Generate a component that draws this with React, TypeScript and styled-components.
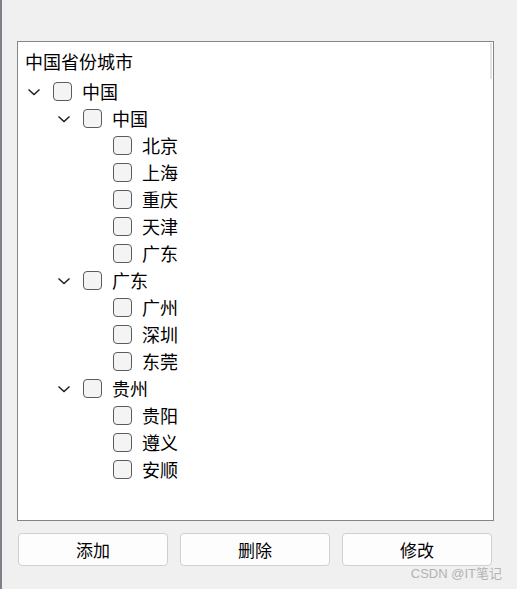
import styled, { createGlobalStyle } from 'styled-components';

const GlobalStyle = createGlobalStyle`
  html, body {
    margin: 0;
    padding: 0;
    background: #f0f0f0;
  }
  body {
    font-family: 'Noto Sans CJK SC', 'Noto Sans', sans-serif;
  }
`;

type Node = { label: string; children?: Node[] };

const tree: Node[] = [
  {
    label: '中国',
    children: [
      {
        label: '中国',
        children: [
          { label: '北京' },
          { label: '上海' },
          { label: '重庆' },
          { label: '天津' },
          { label: '广东' },
        ],
      },
      {
        label: '广东',
        children: [{ label: '广州' }, { label: '深圳' }, { label: '东莞' }],
      },
      {
        label: '贵州',
        children: [{ label: '贵阳' }, { label: '遵义' }, { label: '安顺' }],
      },
    ],
  },
];

const Chevron = () => (
  <svg width="14" height="8" viewBox="0 0 14 8">
    <path d="M1.5 1.5 L7 6.5 L12.5 1.5" fill="none" stroke="#1a1a1a" strokeWidth="1.4" />
  </svg>
);

const TreeRows = ({ nodes, level }: { nodes: Node[]; level: number }) => (
  <>
    {nodes.map((n, i) => (
      <div key={i}>
        <Row level={level}>
          <Expander>{n.children ? <Chevron /> : null}</Expander>
          <Check />
          <Label>{n.label}</Label>
        </Row>
        {n.children && <TreeRows nodes={n.children} level={level + 1} />}
      </div>
    ))}
  </>
);

const App: React.FC = () => {
  return (
    <Window>
      <GlobalStyle />
      <Edge />
      <Body>
        <TreeBox>
          <ScrollHint />
          <Header>中国省份城市</Header>
          <TreeRows nodes={tree} level={0} />
        </TreeBox>
        <Buttons>
          <Button>添加</Button>
          <Button>删除</Button>
          <Button>修改</Button>
        </Buttons>
      </Body>
      <Watermark>CSDN @IT笔记</Watermark>
    </Window>
  );
};

export default App;

const Window = styled.div`
  position: relative;
  display: flex;
  width: 517px;
  height: 589px;
  background: #f0f0f0;
  overflow: hidden;
`;

const Edge = styled.div`
  width: 2px;
  background: #7c8288;
`;

const Body = styled.div`
  display: flex;
  flex-direction: column;
  padding: 41px 0 0 15px;
`;

const TreeBox = styled.div`
  position: relative;
  box-sizing: border-box;
  width: 477px;
  height: 480px;
  background: #ffffff;
  border: 1px solid #858585;
  padding: 6px 0 0 7px;
`;

const ScrollHint = styled.div`
  position: absolute;
  top: 1px;
  right: 1px;
  width: 2px;
  height: 36px;
  background: #e2e2e2;
`;

const Header = styled.div`
  height: 27px;
  line-height: 27px;
  margin-bottom: 3px;
  font-size: 18px;
  color: #000;
`;

const Row = styled.div<{ level: number }>`
  display: flex;
  align-items: center;
  height: 27px;
  padding-left: ${p => p.level * 30}px;
`;

const Expander = styled.div`
  display: flex;
  align-items: center;
  justify-content: center;
  width: 18px;
  margin-right: 10px;
`;

const Check = styled.div`
  box-sizing: border-box;
  width: 19px;
  height: 19px;
  border: 1px solid #5b5b5b;
  border-radius: 4px;
  background: #f4f4f4;
  margin-right: 10px;
`;

const Label = styled.span`
  font-size: 18px;
  color: #000;
  line-height: 27px;
`;

const Buttons = styled.div`
  display: grid;
  grid-template-columns: repeat(3, 150px);
  gap: 12px;
  margin: 12px 0 0 1px;
`;

const Button = styled.button`
  box-sizing: border-box;
  height: 33px;
  background: #fdfdfd;
  border: 1px solid #d0d0d0;
  border-radius: 4px;
  font-family: 'Noto Sans CJK SC', sans-serif;
  font-size: 17px;
  color: #000;
  padding: 0;
`;

const Watermark = styled.div`
  position: absolute;
  right: 15px;
  bottom: 7px;
  font-family: 'Liberation Sans', 'Noto Sans CJK SC', sans-serif;
  font-size: 13px;
  color: #b3b3b3;
`;
